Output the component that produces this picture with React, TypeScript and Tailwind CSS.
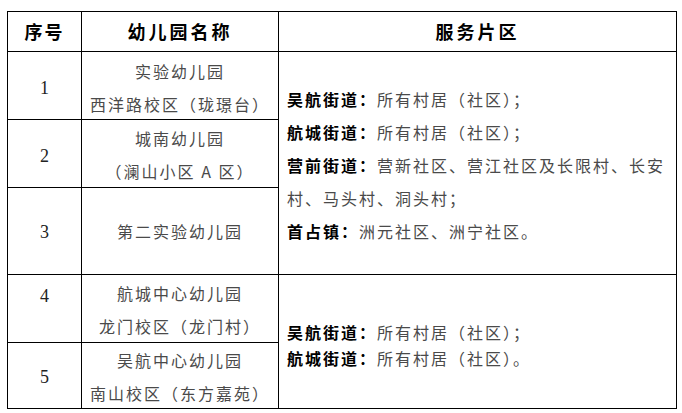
const CJK = "font-['Noto_Sans_CJK_SC','Noto_Sans',sans-serif]";

function Cell({ className = "", children }: { className?: string; children?: React.ReactNode }) {
  return (
    <div className={`flex flex-col items-center justify-center border-r border-b border-black ${className}`}>
      {children}
    </div>
  );
}

function Num({ n }: { n: number }) {
  return <span className="font-['Liberation_Serif',serif] text-[18px] text-[#222]">{n}</span>;
}

function Lines({ lines }: { lines: string[] }) {
  return (
    <div className="text-center text-[16px] leading-[33px] tracking-[2px] text-[#4a4a4a] whitespace-pre">
      {lines.map((l) => (
        <div key={l}>{l}</div>
      ))}
    </div>
  );
}

function Item({ label, text }: { label: string; text: React.ReactNode }) {
  return (
    <div>
      <span className="font-bold text-black">{label}</span>
      <span className="text-[#4a4a4a]">{text}</span>
    </div>
  );
}

export default function App() {
  return (
    <div className={`min-h-screen bg-white pt-[11px] pl-[7px] ${CJK}`}>
      <div className="grid w-[670px] grid-cols-[74px_197px_398px] grid-rows-[40px_68px_68px_87px_68px_66px] border-l border-t border-black">
        {/* header */}
        <Cell>
          <span className="text-[18px] font-bold tracking-[2px] text-black">序号</span>
        </Cell>
        <Cell>
          <span className="text-[18px] font-bold tracking-[3px] text-black">幼儿园名称</span>
        </Cell>
        <Cell>
          <span className="text-[18px] font-bold tracking-[3px] text-black">服务片区</span>
        </Cell>

        {/* row 1 */}
        <Cell className="pt-[6px]">
          <Num n={1} />
        </Cell>
        <Cell className="pt-[4px]">
          <Lines lines={["实验幼儿园", "西洋路校区（珑璟台）"]} />
        </Cell>
        <div className="row-span-3 flex flex-col justify-center border-r border-b border-black pl-[8px] pt-[4px] text-[16px] leading-[33px] tracking-[2px] whitespace-nowrap">
          <Item label="吴航街道：" text="所有村居（社区）；" />
          <Item label="航城街道：" text="所有村居（社区）；" />
          <Item
            label="营前街道："
            text={
              <>
                营新社区、营江社区及长限村、长安
                <br />
                村、马头村、洞头村；
              </>
            }
          />
          <Item label="首占镇：" text="洲元社区、洲宁社区。" />
        </div>

        {/* row 2 */}
        <Cell className="pt-[6px]">
          <Num n={2} />
        </Cell>
        <Cell className="pt-[2px]">
          <Lines lines={["城南幼儿园", "（澜山小区 A 区）"]} />
        </Cell>

        {/* row 3 */}
        <Cell className="pt-[3px]">
          <Num n={3} />
        </Cell>
        <Cell>
          <Lines lines={["第二实验幼儿园"]} />
        </Cell>

        {/* row 4 */}
        <Cell className="justify-start pt-[8px]">
          <Num n={4} />
        </Cell>
        <Cell className="pt-[3px]">
          <Lines lines={["航城中心幼儿园", "龙门校区（龙门村）"]} />
        </Cell>
        <div className="row-span-2 flex flex-col justify-center border-r border-b border-black pl-[8px] pt-[6px] text-[16px] leading-[26px] tracking-[2px] whitespace-nowrap">
          <Item label="吴航街道：" text="所有村居（社区）；" />
          <Item label="航城街道：" text="所有村居（社区）。" />
        </div>

        {/* row 5 */}
        <Cell className="pt-[3px]">
          <Num n={5} />
        </Cell>
        <Cell className="pt-[3px]">
          <Lines lines={["吴航中心幼儿园", "南山校区（东方嘉苑）"]} />
        </Cell>
      </div>
    </div>
  );
}
